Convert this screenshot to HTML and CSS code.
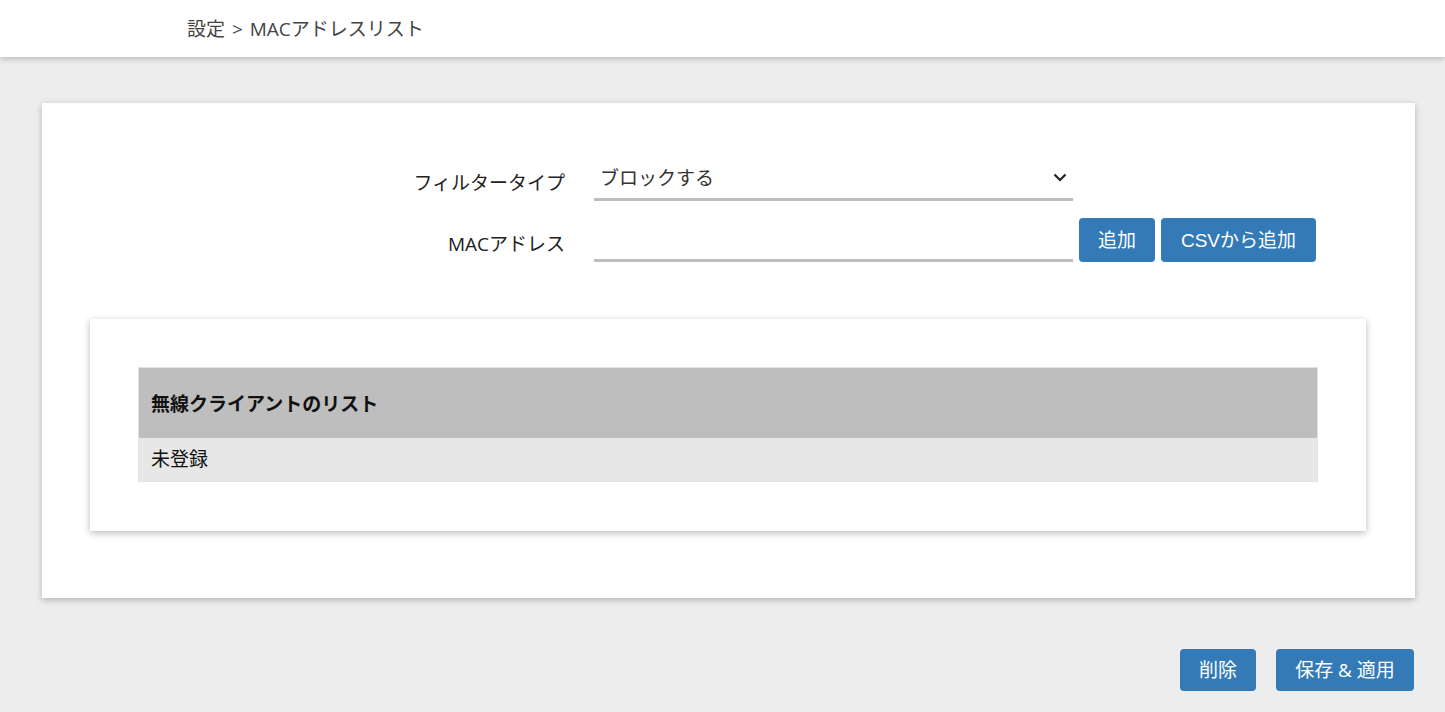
FILE: index.html
```html
<!DOCTYPE html>
<html lang="ja">
<head>
<meta charset="utf-8">
<title>MACアドレスリスト</title>
<link rel="stylesheet" href="styles.css">
</head>
<body>
<header class="topbar">
  <div class="crumb">設定 &gt; MACアドレスリスト</div>
</header>
<main class="page">
  <section class="card">
    <div class="form">
      <div class="row row-select">
        <label class="label">フィルタータイプ</label>
        <div class="select">
          <span class="select-text">ブロックする</span>
          <svg class="chev" width="14" height="9" viewBox="0 0 14 9"><path d="M1.5 1.5 L7 7 L12.5 1.5" fill="none" stroke="#222" stroke-width="2.2"/></svg>
        </div>
      </div>
      <div class="row row-input">
        <label class="label">MACアドレス</label>
        <div class="input"></div>
        <div class="btns">
          <button class="btn btn-add">追加</button>
          <button class="btn btn-csv">CSVから追加</button>
        </div>
      </div>
    </div>
    <div class="inner">
      <table class="list">
        <thead><tr><th>無線クライアントのリスト</th></tr></thead>
        <tbody><tr><td>未登録</td></tr></tbody>
      </table>
    </div>
  </section>
  <div class="actions">
    <button class="btn btn-del">削除</button>
    <button class="btn btn-save">保存 &amp; 適用</button>
  </div>
</main>
</body>
</html>
```
FILE: styles.css
```css
* { box-sizing: border-box; }
html, body { margin: 0; padding: 0; }
body {
  background: #ededed;
  font-family: "Open Sans", "Noto Sans CJK JP", sans-serif;
  color: #222;
  width: 1445px;
  height: 712px;
  overflow: hidden;
}
.topbar {
  height: 57px;
  background: #fff;
  box-shadow: 0 2px 6px rgba(0,0,0,0.22);
  position: relative;
  z-index: 2;
}
.crumb {
  padding-left: 187px;
  line-height: 58px;
  font-size: 19px;
  word-spacing: 2px;
  color: #444;
}
.page {
  padding: 46px 30px 0 42px;
}
.card {
  background: #fff;
  box-shadow: 0 2px 6px rgba(0,0,0,0.25);
  padding: 57px 49px 67px 48px;
}
.form {
  display: flex;
  flex-direction: column;
  gap: 17px;
}
.row {
  display: flex;
  align-items: flex-end;
}
.label {
  width: 475px;
  text-align: right;
  font-size: 19px;
  color: #222;
  margin-right: 29px;
}
.row-select .label { padding-bottom: 5px; }
.row-input .label { padding-bottom: 5px; }
.select {
  width: 479px;
  height: 41px;
  border-bottom: 3px solid #bdbdbd;
  display: flex;
  align-items: center;
  justify-content: space-between;
  padding: 0 6px 4px 6px;
}
.select-text { font-size: 19px; color: #333; }
.input {
  width: 479px;
  height: 43px;
  border-bottom: 3px solid #bdbdbd;
}
.btns {
  display: flex;
  gap: 6px;
  margin-left: 6px;
  align-self: flex-start;
}
.btn {
  background: #337ab7;
  color: #fff;
  border: none;
  border-radius: 4px;
  font-family: "Open Sans", "Noto Sans CJK JP", sans-serif;
  font-size: 19px;
  padding: 0 0 3px 0;
  cursor: pointer;
}
.btn-add { width: 76px; height: 44px; }
.btn-csv { width: 155px; height: 44px; font-family: "Liberation Sans", "Noto Sans CJK JP", sans-serif; }
.inner {
  margin-top: 57px;
  background: #fff;
  box-shadow: 0 2px 7px rgba(0,0,0,0.28);
  padding: 48px 48px 49px 48px;
}
.list {
  width: 100%;
  border-collapse: collapse;
  border: 1px solid #e2e2e2;
}
.list th {
  background: #bebebe;
  height: 70px;
  text-align: left;
  padding: 0 12px;
  font-size: 19px;
  font-weight: bold;
  color: #111;
}
.list td {
  background: #e7e7e7;
  height: 44px;
  padding: 0 12px 2px 12px;
  font-size: 19px;
  color: #111;
}
.actions {
  display: flex;
  justify-content: flex-end;
  gap: 20px;
  margin-top: 51px;
  padding-right: 1px;
}
.btn-del { width: 76px; height: 42px; }
.btn-save { width: 138px; height: 42px; }
```
